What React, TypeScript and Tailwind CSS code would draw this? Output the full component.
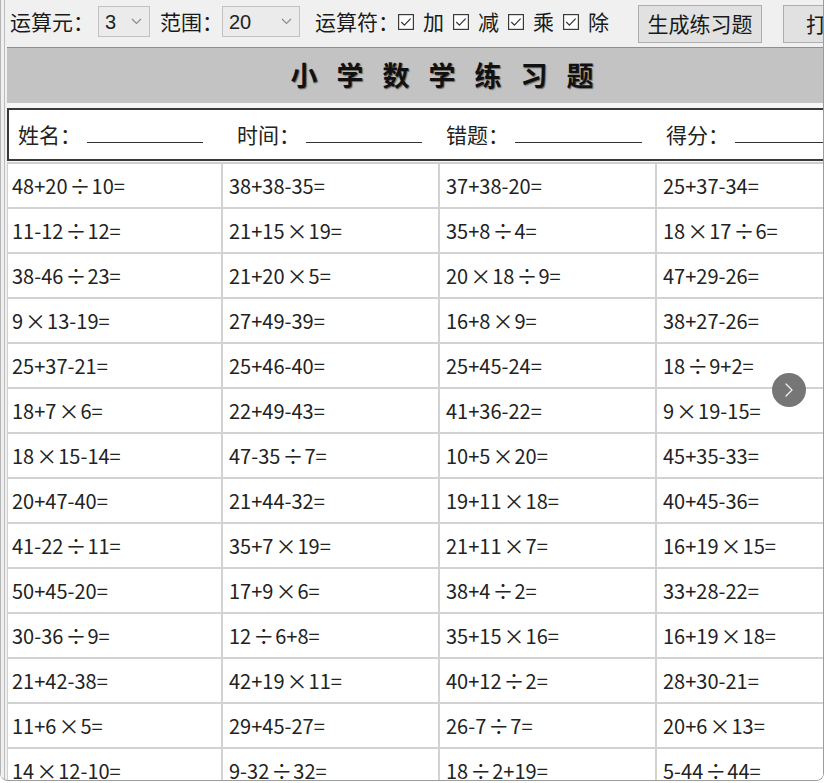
import { ChevronRight } from "lucide-react";

const rows: string[][] = [
  ["48+20÷10=", "38+38-35=", "37+38-20=", "25+37-34="],
  ["11-12÷12=", "21+15×19=", "35+8÷4=", "18×17÷6="],
  ["38-46÷23=", "21+20×5=", "20×18÷9=", "47+29-26="],
  ["9×13-19=", "27+49-39=", "16+8×9=", "38+27-26="],
  ["25+37-21=", "25+46-40=", "25+45-24=", "18÷9+2="],
  ["18+7×6=", "22+49-43=", "41+36-22=", "9×19-15="],
  ["18×15-14=", "47-35÷7=", "10+5×20=", "45+35-33="],
  ["20+47-40=", "21+44-32=", "19+11×18=", "40+45-36="],
  ["41-22÷11=", "35+7×19=", "21+11×7=", "16+19×15="],
  ["50+45-20=", "17+9×6=", "38+4÷2=", "33+28-22="],
  ["30-36÷9=", "12÷6+8=", "35+15×16=", "16+19×18="],
  ["21+42-38=", "42+19×11=", "40+12÷2=", "28+30-21="],
  ["11+6×5=", "29+45-27=", "26-7÷7=", "20+6×13="],
  ["14×12-10=", "9-32÷32=", "18÷2+19=", "5-44÷44="],
];

const ops = ["加", "减", "乘", "除"];

// label, column width, underline width
const fields: [string, string, string][] = [
  ["姓名：", "w-[219px]", "w-[116px]"],
  ["时间：", "w-[209px]", "w-[116px]"],
  ["错题：", "w-[220px]", "w-[127px]"],
  ["得分：", "w-[200px]", "w-[130px]"],
];

const cjk = "font-['Noto_Sans_CJK_SC',sans-serif]";

function CheckBox() {
  return (
    <svg width="16" height="16" viewBox="0 0 16 16" className="shrink-0">
      <rect x="0.6" y="0.6" width="14.8" height="14.8" fill="#fff" stroke="#3a3a3a" strokeWidth="1.2" />
      <path d="M3.3 8 L6.4 11.2 L12.6 4.6" fill="none" stroke="#333" strokeWidth="1.2" />
    </svg>
  );
}

function Chevron() {
  return (
    <svg width="11" height="7" viewBox="0 0 11 7">
      <path d="M1 1 L5.5 5.5 L10 1" fill="none" stroke="#8a8a8a" strokeWidth="1.1" />
    </svg>
  );
}

function Select({ value, width }: { value: string; width: string }) {
  return (
    <div
      className={`${width} h-[31px] shrink-0 flex items-center justify-between border border-[#c2c2c2] bg-[#ebebeb] pl-[6px] pr-[7px]`}
    >
      <span className="font-['Liberation_Sans',sans-serif] text-[20px] text-[#222]">{value}</span>
      <Chevron />
    </div>
  );
}

// × and ÷ take a full-width cell like the Song font in the original
function Expr({ text }: { text: string }) {
  return (
    <>
      {text.split("").map((ch, i) =>
        ch === "÷" || ch === "×" ? (
          <span key={i} className="inline-block w-[24px] pl-[2px] text-left text-[21px]">
            {ch}
          </span>
        ) : (
          <span key={i}>{ch}</span>
        )
      )}
    </>
  );
}

export default function App() {
  return (
    <div className={`relative w-[825px] h-[783px] bg-white overflow-hidden ${cjk}`}>
      <div className="flex h-[781px] w-[824px] overflow-hidden rounded-b-[8px] border-r border-b border-[#9c9c9c] bg-[#f0f0f0]">
        {/* window edge */}
        <div className="w-[7px] shrink-0 border-l border-[#b4b4b4]">
          <div className="ml-[3px] h-full w-px bg-[#bcbcbc]" />
        </div>

        <div className="flex min-w-0 flex-1 flex-col">
          {/* toolbar */}
          <div className="flex h-[47px] shrink-0 items-center whitespace-nowrap pb-[4px] pl-[3px] text-[21px] text-[#1a1a1a]">
            <span className="w-[88px] shrink-0">运算元：</span>
            <Select value="3" width="w-[52px]" />
            <span className="ml-[10px] w-[62px] shrink-0">范围：</span>
            <Select value="20" width="w-[78px]" />
            <span className="ml-[15px] w-[83px] shrink-0">运算符：</span>
            {ops.map((op) => (
              <span key={op} className="mr-[9px] flex shrink-0 items-center gap-[9px]">
                <CheckBox />
                <span>{op}</span>
              </span>
            ))}
            <button className="ml-[20px] mt-[4px] h-[38px] w-[124px] shrink-0 border border-[#adadad] bg-[#e1e1e1] text-[21px]">
              生成练习题
            </button>
            <button className="ml-[21px] mt-[4px] h-[38px] w-[88px] shrink-0 border border-[#adadad] bg-[#e1e1e1] text-[21px]">
              打印
            </button>
          </div>

          {/* sheet */}
          <div className="w-[870px] shrink-0 border-t border-[#8e8e8e] bg-[#f6f6f6]">
            <div className="flex h-[55px] items-center justify-center bg-[#c3c3c3]">
              <h1
                className="m-0 pl-[19px] text-[27px] font-bold tracking-[19px] text-[#111]"
                style={{ textShadow: "1px 1px 1px #6a6a6a" }}
              >
                小学数学练习题
              </h1>
            </div>

            <div className="mt-[5px] flex h-[53px] items-center border-2 border-[#3a3a3a] bg-white pl-[9px] text-[21px] text-[#222]">
              {fields.map(([label, w, line]) => (
                <div key={label} className={`flex ${w} shrink-0 items-end`}>
                  <span className="w-[69px] shrink-0">{label}</span>
                  <span className={`mb-[7px] inline-block h-0 shrink-0 border-b-[1.5px] border-[#333] ${line}`} />
                </div>
              ))}
            </div>

            <div className="mt-[1px] border-t-2 border-l border-[#cfcfcf] bg-white text-[20px] text-[#222]">
              {rows.map((row, r) => (
                <div key={r} className="grid h-[45px] grid-cols-[215px_217px_217px_217px] border-b-2 border-[#d2d2d2]">
                  {row.map((q, c) => (
                    <div
                      key={c}
                      className={`flex items-center border-r-2 border-[#d2d2d2] ${c === 0 ? "pl-[4px]" : "pl-[6px]"}`}
                    >
                      <Expr text={q} />
                    </div>
                  ))}
                </div>
              ))}
            </div>
          </div>
        </div>
      </div>

      {/* page-turn overlay */}
      <div className="absolute left-[772px] top-[373px] flex h-[34px] w-[34px] items-center justify-center rounded-full bg-[#6f6f6f]/95">
        <ChevronRight size={24} strokeWidth={1.3} color="#f2f2f2" />
      </div>
    </div>
  );
}
